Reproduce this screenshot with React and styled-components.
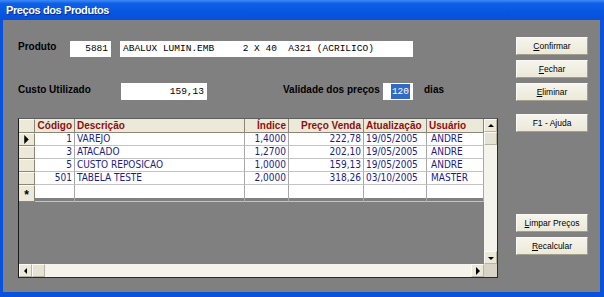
import React from "react";
import styled, { createGlobalStyle } from "styled-components";

const GlobalStyle = createGlobalStyle`
  html, body {
    margin: 0;
    padding: 0;
    background: #808080;
  }
  body {
    font-family: "Liberation Sans", Arial, sans-serif;
  }
`;

const NARROW = `"DejaVu Sans Condensed", "DejaVu Sans", "Liberation Sans", sans-serif`;
const MONO = `"Liberation Mono", "Courier New", monospace`;

const rows = [
  { cod: "1", desc: "VAREJO", ind: "1,4000", preco: "222,78", data: "19/05/2005", user: "ANDRE", current: true },
  { cod: "3", desc: "ATACADO", ind: "1,2700", preco: "202,10", data: "19/05/2005", user: "ANDRE" },
  { cod: "5", desc: "CUSTO REPOSICAO", ind: "1,0000", preco: "159,13", data: "19/05/2005", user: "ANDRE" },
  { cod: "501", desc: "TABELA TESTE", ind: "2,0000", preco: "318,26", data: "03/10/2005", user: "MASTER" },
];

const columns = "16px 40px 170px 44px 75px 63px 57px";

function Arrow({ dir, size = 8 }) {
  const pts = {
    up: "1,5 4,2 7,5",
    down: "1,3 4,6 7,3",
    left: "5,1 2,4 5,7",
    right: "2,0 6,4 2,8",
  }[dir];
  return (
    <svg width={size} height={size} viewBox="0 0 8 8">
      <polygon points={pts} fill="#000" />
    </svg>
  );
}

function Button({ mnemonic, rest, top }) {
  return (
    <Btn $top={top}>
      {mnemonic && <u>{mnemonic}</u>}
      {rest}
    </Btn>
  );
}

export default function App() {
  return (
    <>
      <GlobalStyle />
      <Window>
        <TitleBar>Preços dos Produtos</TitleBar>
        <Body>
          <Main>
            <FieldRow>
              <Label $width={52} $top={0}>Produto</Label>
              <Input $width={41} $height={16} $align="right">5881</Input>
              <Input $width={293} $height={16} $left={9}>
                {"ABALUX LUMIN.EMB     2 X 40  A321 (ACRILICO)"}
              </Input>
            </FieldRow>

            <FieldRow $top={26}>
              <Label $width={103} $top={1}>Custo Utilizado</Label>
              <Input $width={86} $height={17} $align="right">159,13</Input>
              <Label $width={100} $top={1} $left={76}>Validade dos preços</Label>
              <Input $width={30} $height={17} $align="right">
                <Selected>120</Selected>
              </Input>
              <Label $top={1} $left={11}>dias</Label>
            </FieldRow>

            <GridFrame>
              <Viewport>
                <Row $header>
                  <SelCell $header />
                  <HeadCell $align="right">Código</HeadCell>
                  <HeadCell>Descrição</HeadCell>
                  <HeadCell $align="right">Índice</HeadCell>
                  <HeadCell $align="right">Preço Venda</HeadCell>
                  <HeadCell>Atualização</HeadCell>
                  <HeadCell>Usuário</HeadCell>
                </Row>
                {rows.map((r) => (
                  <Row key={r.cod}>
                    <SelCell>{r.current && <Arrow dir="right" size={9} />}</SelCell>
                    <Cell $align="right">{r.cod}</Cell>
                    <Cell>{r.desc}</Cell>
                    <Cell $align="right">{r.ind}</Cell>
                    <Cell $align="right">{r.preco}</Cell>
                    <Cell>{r.data}</Cell>
                    <Cell $pad={4}>{r.user}</Cell>
                  </Row>
                ))}
                <Row>
                  <SelCell>
                    <Star>*</Star>
                  </SelCell>
                  <Cell />
                  <Cell />
                  <Cell />
                  <Cell />
                  <Cell />
                  <Cell />
                </Row>
              </Viewport>

              <VScroll>
                <ScrollBtn>
                  <Arrow dir="up" />
                </ScrollBtn>
                <Thumb />
                <Track />
                <ScrollBtn>
                  <Arrow dir="down" />
                </ScrollBtn>
              </VScroll>

              <HScroll>
                <ScrollBtn>
                  <Arrow dir="left" />
                </ScrollBtn>
                <Thumb />
                <Track />
                <ScrollBtn>
                  <Arrow dir="right" />
                </ScrollBtn>
              </HScroll>

              <Corner />
            </GridFrame>
          </Main>

          <Buttons>
            <Button mnemonic="C" rest="onfirmar" top={0} />
            <Button mnemonic="F" rest="echar" top={5} />
            <Button mnemonic="E" rest="liminar" top={5} />
            <Button rest="F1 - Ajuda" top={13} />
            <Button mnemonic="L" rest="impar Preços" top={82} />
            <Button mnemonic="R" rest="ecalcular" top={5} />
          </Buttons>
        </Body>
      </Window>
    </>
  );
}

const Window = styled.div`
  width: 604px;
  height: 297px;
  display: flex;
  flex-direction: column;
  overflow: hidden;
`;

const TitleBar = styled.div`
  height: 20px;
  flex-shrink: 0;
  display: flex;
  align-items: center;
  padding-left: 6px;
  background: linear-gradient(
    to bottom,
    #3d8af7 0%,
    #0f5fe6 18%,
    #0656e2 60%,
    #0a4fd6 100%
  );
  color: #fff;
  font-weight: bold;
  font-size: 11px;
  letter-spacing: -0.4px;
  text-shadow: 1px 1px 0 #0a2a8c;
`;

const Body = styled.div`
  flex: 1;
  display: flex;
  background: #808080;
  border-style: solid;
  border-color: #0a52dc;
  border-width: 0 4px 5px 3px;
`;

const Main = styled.div`
  width: 480px;
  padding: 21px 0 0 15px;
  display: flex;
  flex-direction: column;
`;

const FieldRow = styled.div`
  display: flex;
  align-items: flex-start;
  margin-top: ${(p) => p.$top || 0}px;
`;

const Label = styled.div`
  width: ${(p) => (p.$width ? `${p.$width}px` : "auto")};
  margin-left: ${(p) => p.$left || 0}px;
  padding-top: ${(p) => p.$top || 0}px;
  font-size: 10px;
  font-weight: bold;
  line-height: 12px;
  color: #000;
  white-space: nowrap;
`;

const Input = styled.div`
  box-sizing: border-box;
  width: ${(p) => p.$width}px;
  height: ${(p) => p.$height}px;
  margin-left: ${(p) => p.$left || 0}px;
  padding: 0 3px;
  background: #fff;
  font-family: ${MONO};
  font-size: 9.5px;
  line-height: ${(p) => p.$height}px;
  text-align: ${(p) => p.$align || "left"};
  white-space: pre;
  color: #000;
  overflow: hidden;
`;

const Selected = styled.span`
  background: #316ac5;
  color: #fff;
  padding: 2px 1px;
`;

const GridFrame = styled.div`
  box-sizing: border-box;
  margin-top: 18px;
  width: 480px;
  height: 160px;
  display: grid;
  grid-template-columns: 1fr 13px;
  grid-template-rows: 1fr 13px;
  border: 1px solid;
  border-color: #5e5e5e #2a2a2a #2a2a2a #1a1a1a;
`;

const Viewport = styled.div`
  background: #808080;
  overflow: hidden;
`;

const Row = styled.div`
  display: grid;
  grid-template-columns: ${columns};
  height: ${(p) => (p.$header ? 14 : 13)}px;
  background: ${(p) => (p.$header ? "#ece9d8" : "#fff")};
`;

const Cell = styled.div`
  box-sizing: border-box;
  border-right: 1px solid #a8a8a8;
  border-bottom: 1px solid #c4c4c4;
  padding: 0 ${(p) => (p.$align === "right" ? 2 : 0)}px 0
    ${(p) => (p.$align === "right" ? 0 : p.$pad || 2)}px;
  font-family: ${NARROW};
  font-stretch: condensed;
  font-size: 10px;
  line-height: 12px;
  text-align: ${(p) => p.$align || "left"};
  color: #1c1c86;
  white-space: nowrap;
  overflow: hidden;
`;

const HeadCell = styled.div`
  box-sizing: border-box;
  border-right: 1px solid #8a8678;
  border-bottom: 1px solid #8a8678;
  padding: 0 2px;
  font-size: 10px;
  font-weight: bold;
  line-height: 13px;
  text-align: ${(p) => p.$align || "left"};
  color: #8c0f0f;
  white-space: nowrap;
  overflow: hidden;
`;

const SelCell = styled.div`
  box-sizing: border-box;
  display: flex;
  align-items: center;
  justify-content: center;
  background: #ece9d8;
  border-right: 1px solid #8a8678;
  border-bottom: 1px solid #8a8678;
  border-top: 1px solid #fbfaf4;
`;

const Star = styled.span`
  font-size: 12px;
  font-weight: bold;
  line-height: 12px;
  margin-top: 3px;
  color: #000;
`;

const VScroll = styled.div`
  display: flex;
  flex-direction: column;
  background: #f4f3ec;
`;

const HScroll = styled.div`
  display: flex;
  background: #f4f3ec;
`;

const ScrollBtn = styled.div`
  box-sizing: border-box;
  width: 13px;
  height: 13px;
  flex-shrink: 0;
  display: flex;
  align-items: center;
  justify-content: center;
  background: #ece9d8;
  border: 1px solid;
  border-color: #fbfaf4 #b9b5a5 #b9b5a5 #fbfaf4;
`;

const Thumb = styled(ScrollBtn)`
  background: #e6e3d5;
`;

const Track = styled.div`
  flex: 1;
`;

const Corner = styled.div`
  background: #d8d4c6;
`;

const Buttons = styled.div`
  display: flex;
  flex-direction: column;
  margin-left: 18px;
  padding-top: 17px;
`;

const Btn = styled.div`
  box-sizing: border-box;
  width: 72px;
  height: 18px;
  margin-top: ${(p) => p.$top}px;
  display: flex;
  align-items: center;
  justify-content: center;
  background: linear-gradient(to bottom, #f6f4ec 0%, #ece9d8 100%);
  border: 1px solid;
  border-color: #faf9f3 #a39f8f #a39f8f #faf9f3;
  font-family: "Liberation Sans", Arial, sans-serif;
  font-size: 8.5px;
  color: #000;
  white-space: pre;

  u {
    text-decoration: underline;
  }
`;
